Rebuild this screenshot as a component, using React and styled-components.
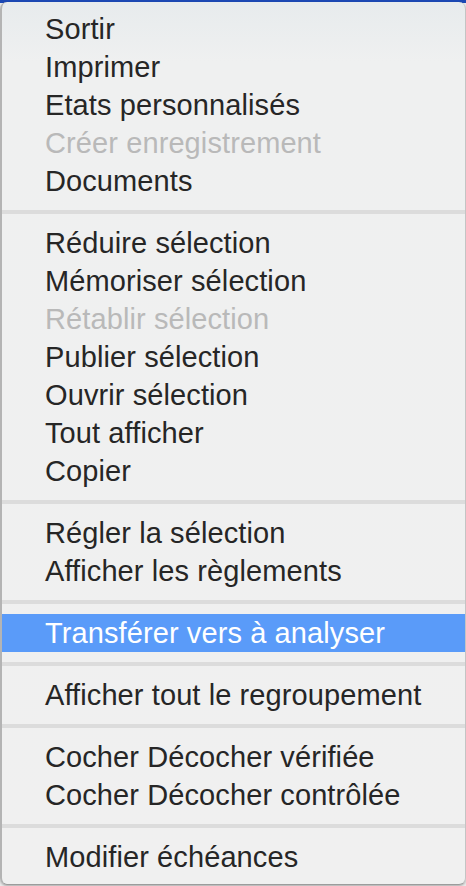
import React from 'react';
import styled, { createGlobalStyle } from 'styled-components';

const GlobalStyle = createGlobalStyle`
  html, body {
    margin: 0;
    padding: 0;
  }
  body {
    background: #e4e4e4;
    font-family: "Liberation Sans", Arial, sans-serif;
  }
`;

const Screen = styled.div`
  width: 466px;
  height: 886px;
  background: linear-gradient(#1c48b4 0, #1c48b4 3px, #e9e9e9 3px);
  overflow: hidden;
`;

const Menu = styled.ul`
  box-sizing: border-box;
  list-style: none;
  margin: 2px 0 0;
  padding: 8px 0;
  width: 466px;
  border-radius: 7px;
  border-left: 2px solid #b4b4b4;
  border-right: 1px solid #c4c4c4;
  border-bottom: 1px solid #9c9c9c;
  background: linear-gradient(#e7ebed 0, #eff0f0 60px, #f0f0f0 100%);
  box-shadow: 0 1px 2px rgba(0, 0, 0, 0.25);
`;

const Item = styled.li`
  height: 38px;
  line-height: 38px;
  padding-left: 43px;
  font-size: 29px;
  letter-spacing: 0.1px;
  white-space: nowrap;
  color: ${props => props.$disabled ? '#b9b9b9' : props.$active ? '#ffffff' : '#262626'};
  background: ${props => props.$active ? '#5a9bf9' : 'transparent'};
`;

const Separator = styled.li`
  height: 4px;
  margin: 10px 0;
  background: #dcdcdc;
`;

const groups = [
  [
    { label: 'Sortir' },
    { label: 'Imprimer' },
    { label: 'Etats personnalisés' },
    { label: 'Créer enregistrement', disabled: true },
    { label: 'Documents' },
  ],
  [
    { label: 'Réduire sélection' },
    { label: 'Mémoriser sélection' },
    { label: 'Rétablir sélection', disabled: true },
    { label: 'Publier sélection' },
    { label: 'Ouvrir sélection' },
    { label: 'Tout afficher' },
    { label: 'Copier' },
  ],
  [
    { label: 'Régler la sélection' },
    { label: 'Afficher les règlements' },
  ],
  [
    { label: 'Transférer vers à analyser', active: true },
  ],
  [
    { label: 'Afficher tout le regroupement' },
  ],
  [
    { label: 'Cocher Décocher vérifiée' },
    { label: 'Cocher Décocher contrôlée' },
  ],
  [
    { label: 'Modifier échéances' },
  ],
];

export default function App() {
  return (
    <Screen>
      <GlobalStyle />
      <Menu>
        {groups.map((group, gi) => (
          <React.Fragment key={gi}>
            {gi > 0 && <Separator />}
            {group.map(item => (
              <Item key={item.label} $disabled={item.disabled} $active={item.active}>
                {item.label}
              </Item>
            ))}
          </React.Fragment>
        ))}
      </Menu>
    </Screen>
  );
}
